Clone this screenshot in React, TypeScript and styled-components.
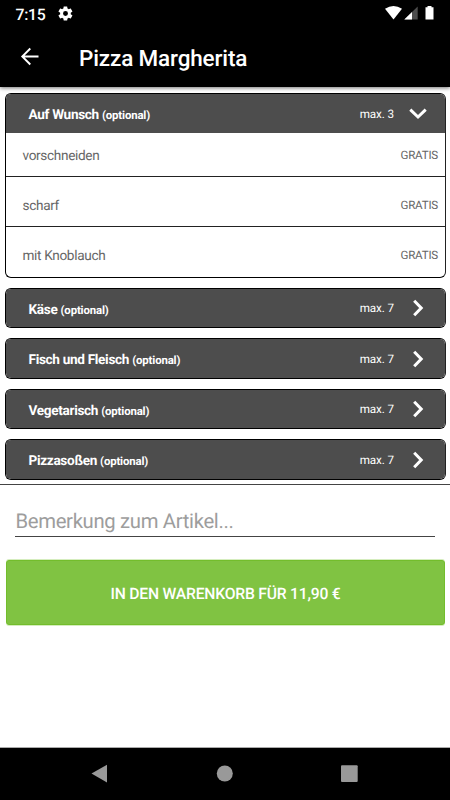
import React from 'react';
import styled, { createGlobalStyle } from 'styled-components';

const GlobalStyle = createGlobalStyle`
  * { box-sizing: border-box; text-rendering: geometricPrecision; }
  html, body { margin: 0; background: #fff; }
  body { font-family: Roboto, "Liberation Sans", sans-serif; }
`;

const Screen = styled.div`
  width: 450px;
  height: 800px;
  display: flex;
  flex-direction: column;
  overflow: hidden;
  background: #fff;
`;

const Header = styled.header`
  flex: none;
  height: 87px;
  background: #000;
  color: #fff;
  box-shadow: 0 1px 4px rgba(0, 0, 0, 0.55);
`;

const StatusBar = styled.div`
  height: 27px;
  display: flex;
  align-items: center;
  padding: 0 15px;
`;

const Clock = styled.span`
  width: 42px;
  font-size: 15.8px;
  font-weight: 500;
  line-height: 20px;
  letter-spacing: -0.3px;
  padding: 2px 0 0 0.5px;
`;

const StatusIcons = styled.svg`
  display: block;
  margin-left: auto;
`;

const TitleBar = styled.div`
  height: 60px;
  display: flex;
  align-items: center;
  padding-left: 15.5px;
`;

const BackButton = styled.button`
  display: flex;
  width: 63.5px;
  padding: 0 0 2px;
  border: 0;
  background: none;
  color: inherit;
`;

const Title = styled.h1`
  margin: 0;
  padding-top: 3px;
  font-size: 22.5px;
  font-weight: 500;
  line-height: 28px;
  letter-spacing: -0.15px;
`;

const Options = styled.main`
  flex: none;
  height: 398px;
  padding: 6px 4px 0 5px;
  border-bottom: 1px solid #444;
`;

const Group = styled.section<{ $gap: number }>`
  margin-bottom: ${(p) => p.$gap}px;
  border: 1px solid #000;
  border-right-color: #222;
  border-radius: 6px;
  overflow: hidden;
`;

const GroupHeader = styled.div<{ $height: number }>`
  display: flex;
  align-items: center;
  height: ${(p) => p.$height}px;
  padding: 0 17px 0 22.5px;
  background: #4d4d4d;
  color: #fff;
`;

const GroupName = styled.span`
  flex: 1;
  padding-top: 3px;
  font-size: 13.6px;
  font-weight: 700;
  line-height: 18px;
  letter-spacing: -0.32px;
`;

const Optional = styled.span`
  font-size: 11.4px;
  letter-spacing: -0.15px;
`;

const Limit = styled.span`
  width: 35px;
  margin-right: 14px;
  font-size: 11.7px;
  line-height: 16px;
  letter-spacing: -0.1px;
  text-align: right;
  white-space: nowrap;
`;

const Chevron = styled.svg`
  flex: none;
  display: block;
`;

const Item = styled.div<{ $height: number }>`
  display: flex;
  align-items: center;
  justify-content: space-between;
  height: ${(p) => p.$height}px;
  padding: 1px 7px 0 16.5px;
  color: #666;
  & + & {
    border-top: 1px solid #222;
    padding-top: 6px;
  }
`;

const ItemName = styled.span`
  padding-top: 2px;
  font-size: 13.6px;
  letter-spacing: -0.33px;
`;

const Price = styled.span`
  font-size: 11.6px;
  letter-spacing: -0.22px;
`;

const Remark = styled.input`
  flex: none;
  display: block;
  width: 420px;
  height: 33px;
  margin: 19px 0 23px 15px;
  padding: 2px 0 0 0.5px;
  border: 0;
  border-bottom: 1px solid #444;
  background: transparent;
  font: 400 20.3px/28px Roboto, "Liberation Sans", sans-serif;
  letter-spacing: -0.33px;
  outline: 0;
  &::placeholder { color: #9d9d9d; opacity: 1; }
`;

const CartButton = styled.button`
  flex: none;
  height: 65px;
  margin: 0 5px 0 6px;
  padding: 2px 0 0;
  border: 1px solid #73bd2c;
  border-radius: 3px;
  box-shadow: 0 -1px 0 #d5edbe, 0 1px 0 #d5edbe;
  background: #80c342;
  color: #fff;
  font: 500 15.7px/20px Roboto, "Liberation Sans", sans-serif;
  letter-spacing: -0.22px;
`;

const NavBar = styled.nav`
  flex: none;
  height: 53px;
  margin-top: auto;
  border-top: 1px solid #aaa;
  background: #000;
`;

type OptionItem = { name: string; price: string; height: number };
type OptionGroup = { name: string; max: number; height: number; gap: number; items: OptionItem[] };

const groups: OptionGroup[] = [
  {
    name: 'Auf Wunsch', max: 3, height: 39, gap: 10,
    items: [
      { name: 'vorschneiden', price: 'GRATIS', height: 43 },
      { name: 'scharf', price: 'GRATIS', height: 50 },
      { name: 'mit Knoblauch', price: 'GRATIS', height: 51 },
    ],
  },
  { name: 'Käse', max: 7, height: 38, gap: 10, items: [] },
  { name: 'Fisch und Fleisch', max: 7, height: 39, gap: 10, items: [] },
  { name: 'Vegetarisch', max: 7, height: 38, gap: 10, items: [] },
  { name: 'Pizzasoßen', max: 7, height: 39, gap: 4, items: [] },
];

export default function App() {
  return (
    <>
      <GlobalStyle />
      <Screen>
        <Header>
          <StatusBar>
            <Clock>7:15</Clock>
            <svg width="17" height="17" viewBox="0 0 24 24" fill="#fff">
              <path d="M19.4 13a7.6 7.6 0 0 0 0-2l2.1-1.6c.2-.2.3-.4.1-.7l-2-3.4c-.1-.2-.4-.3-.6-.2l-2.5 1a7.3 7.3 0 0 0-1.7-1l-.4-2.6c0-.3-.2-.5-.5-.5h-4c-.3 0-.5.2-.5.5L9 5.1c-.6.3-1.2.6-1.7 1l-2.5-1c-.2-.1-.5 0-.6.2l-2 3.4c-.1.3-.1.5.1.7L4.5 11a7.6 7.6 0 0 0 0 2l-2.2 1.6c-.2.2-.2.4-.1.7l2 3.4c.1.2.4.3.6.2l2.5-1c.5.4 1.1.7 1.7 1l.4 2.6c0 .3.2.5.5.5h4c.3 0 .5-.2.5-.5l.4-2.6c.6-.3 1.2-.6 1.7-1l2.5 1c.2.1.5 0 .6-.2l2-3.4c.2-.3.1-.5-.1-.7zM12 15.5a3.5 3.5 0 1 1 0-7 3.5 3.5 0 0 1 0 7z" />
            </svg>
            <StatusIcons width="50" height="15" viewBox="0 0 50 15">
              <path d="M0 2.7Q8.500-2.700 17 2.700L8.500 13.500Z" fill="#fff" />
              <path d="M19.3 13.5 32.7 0.5V13.5Z" fill="#4d4d4d" />
              <path d="M19.3 13.5 27 6V13.5Z" fill="#fff" />
              <path d="M42.5 0h4v1.2h2v12.3h-8V1.200h2Z" fill="#fff" />
            </StatusIcons>
          </StatusBar>
          <TitleBar>
            <BackButton aria-label="Zurück">
              <svg width="27" height="27" viewBox="0 0 24 24" fill="#fff">
                <path d="M20 11.1H7.7l5.600-5.600L12.1 4.300 4.400 12l7.700 7.700 1.200-1.200-5.600-5.600H20z" />
              </svg>
            </BackButton>
            <Title>Pizza Margherita</Title>
          </TitleBar>
        </Header>
        <Options>
          {groups.map((group) => (
            <Group key={group.name} $gap={group.gap}>
              <GroupHeader $height={group.height}>
                <GroupName>{group.name} <Optional>(optional)</Optional></GroupName>
                <Limit>max. {group.max}</Limit>
                <Chevron width="20" height="20" viewBox="0 0 20 20" fill="none" stroke="#fff" strokeWidth="3">
                  <path d={group.items.length ? 'M2.3 5.7 10 13 17.7 5.7' : 'M6.2 2.8 13.2 10 6.2 17.2'} />
                </Chevron>
              </GroupHeader>
              {group.items.map((item) => (
                <Item key={item.name} $height={item.height}>
                  <ItemName>{item.name}</ItemName>
                  <Price>{item.price}</Price>
                </Item>
              ))}
            </Group>
          ))}
        </Options>
        <Remark placeholder="Bemerkung zum Artikel..." />
        <CartButton>IN DEN WARENKORB FÜR 11,90 €</CartButton>
        <NavBar>
          <svg width="450" height="52" viewBox="0 0 450 52" fill="#999">
            <path d="M91.5 25.5 107 16.700V34.500Z" />
            <circle cx="224.8" cy="25.5" r="8" />
            <rect x="341" y="17.2" width="16.7" height="16.7" rx="1" />
          </svg>
        </NavBar>
      </Screen>
    </>
  );
}
